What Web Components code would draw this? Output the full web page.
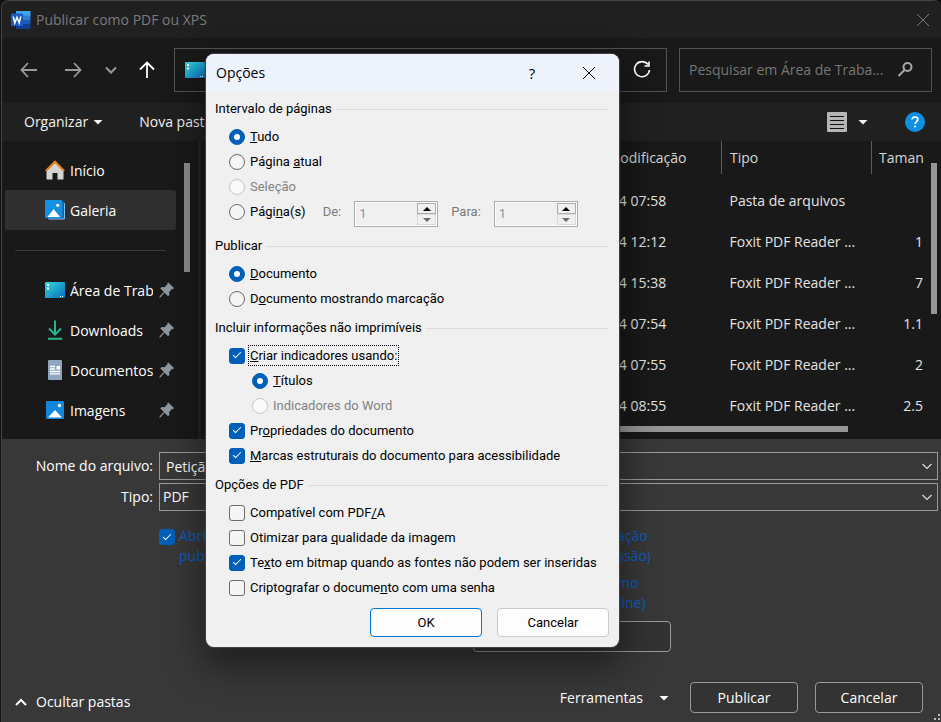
<!DOCTYPE html>
<html lang="pt-BR">
<head>
<meta charset="utf-8">
<title>Publicar como PDF ou XPS</title>
<style>
    body {
        margin: 0;
        background: #101010;
        color: #fff;
        font: 14px/20px "Open Sans", "Noto Sans", sans-serif;
    }
</style>
</head>
<body>
<publish-window></publish-window>

<script>
const ICONS = {
    word: `<svg viewBox="0 0 20 20" stroke-width="0"><path fill="#41a5ee" d="M5 1h14.500v5H5z"/><path fill="#2b7cd3" d="M5 5.500h14.500V10H5z"/><path fill="#185abd" d="M5 10h14.500v4.500H5z"/><path fill="#103f91" d="M5 14.500h14.500V19H5z"/><rect y="3.500" width="12" height="12.500" rx="1" fill="#185abd"/><path fill="none" stroke="#fff" stroke-width="1.500" d="M2.200 6.500l1.600 6.500L6 7.300 8.200 13l1.600-6.500"/></svg>`,
    close: `<svg viewBox="0 0 20 20"><path d="M4 4l12 12M16 4L4 16"/></svg>`,
    back: `<svg viewBox="0 0 20 20"><path stroke-width="1.800" d="M18 10H3M9 3L2.500 10 9 17"/></svg>`,
    forward: `<svg viewBox="0 0 20 20"><path stroke-width="1.800" d="M2 10h15M11 3l6.500 7L11 17"/></svg>`,
    down: `<svg viewBox="0 0 20 20"><path stroke-width="2" d="M5 7.500l5 5 5-5"/></svg>`,
    chevron: `<svg viewBox="0 0 20 20"><path stroke-width="1.200" d="M5.500 8l4.500 4.500L14.500 8"/></svg>`,
    up: `<svg viewBox="0 0 20 20"><path stroke-width="1.800" d="M10 18V3M3 9.500L10 2.500l7 7"/></svg>`,
    collapse: `<svg viewBox="0 0 20 20"><path stroke-width="2" d="M5 13l5-5 5 5"/></svg>`,
    caret: `<svg viewBox="0 0 20 20"><path fill="currentColor" stroke="none" d="M5.500 8h9L10 12.500z"/></svg>`,
    refresh: `<svg viewBox="0 0 20 20"><path stroke-width="1.600" d="M16 4.600A7.500 7.500 0 1 0 17.500 10M17 1.500V6h-4.500"/></svg>`,
    search: `<svg viewBox="0 0 20 20"><circle cx="12.500" cy="7" r="4" stroke-width="2"/><path stroke-width="2" d="M9.500 10L3.500 16"/></svg>`,
    list: `<svg viewBox="0 0 20 20"><rect width="20" height="20" rx="1" fill="#b5b5b5" stroke="none"/><path stroke="#111" d="M3 4.500h14M3 8.500h14M3 12.500h14M3 16.500h14"/></svg>`,
    help: `<svg viewBox="0 0 20 20"><circle cx="10" cy="10" r="10" fill="#0f8fe0" stroke="none"/><path stroke="#fff" stroke-width="1.700" d="M7.200 7.500C7.300 5.800 8.500 5 10 5s2.800.9 2.800 2.400c0 2-2.700 2.300-2.700 4.600"/><circle cx="10.100" cy="14.500" r="1.100" fill="#fff" stroke="none"/></svg>`,
    desktop: `<svg viewBox="0 0 20 20"><defs><linearGradient id="d" x2="1" y2="1"><stop stop-color="#35d8da"/><stop offset="1" stop-color="#0a6cc0"/></linearGradient></defs><rect y="2" width="20" height="16" rx="1" fill="url(#d)" stroke="none"/><path fill="#fff" stroke="none" d="M2 4h2v2H2zM2 7.500h2v2H2zM15 16h1v1h-1zM17 16h1v1h-1z"/></svg>`,
    home: `<svg viewBox="0 0 20 20"><path fill="#d4d4d4" stroke="none" d="M10 2.500L1.500 11v8.500h6V13h5v6.500h6V11z"/><path stroke="#e8821c" stroke-width="2" d="M.8 11L10 1.700 19.200 11"/></svg>`,
    gallery: `<svg viewBox="0 0 20 20"><rect x="3" y="2.500" width="17" height="17" rx="1.500" fill="#7dbdf0" stroke="none"/><rect x="2" y="1.500" width="17" height="17" rx="1" fill="#0b5fb0" stroke="none"/><rect width="17.500" height="18" rx="1" fill="#1590e0" stroke="none"/><path fill="#fff" stroke="none" d="M2.500 17L8.700 9l6.300 8z"/><circle cx="12.700" cy="5.300" r="1.600" fill="#fff" stroke="none"/></svg>`,
    download: `<svg viewBox="0 0 20 20"><path stroke="#24b88d" stroke-width="2" d="M10 .5V14M4 8.500l6 6 6-6M3 18.700h14"/></svg>`,
    document: `<svg viewBox="0 0 20 20"><rect x="3" width="14" height="20" rx="1" fill="#8fa6c0" stroke="none"/><path stroke="#fff" stroke-width="1.300" d="M5 6.500h5M5 9h5M5 11.500h10M5 13.800h10"/><path fill="#fff" stroke="none" d="M11.500 6H15v3.500h-3.500z"/></svg>`,
    image: `<svg viewBox="0 0 20 20"><rect x="1" y="1" width="18" height="18" rx="1" fill="#1285dc" stroke="none"/><path fill="#fff" stroke="none" d="M3 17.500L10 10l7 7.500z"/><circle cx="14.500" cy="5.500" r="1.700" fill="#fff" stroke="none"/></svg>`,
    pin: `<svg viewBox="1 2 17 17"><path fill="#8d979f" stroke="none" d="M12 2.500l6 6-1.200 1.200-1-.2-3 3 .3 3.300-1.400 1.400-3.700-3.700L4 18l-1.700.7.700-1.700L7.300 12.500 3.400 8.600 4.800 7.200l3.200.3 3-3-.2-.8z"/></svg>`
};

// <ui-icon name="..."> draws one of the icons above
class UiIcon extends HTMLElement {
    constructor() {
        super();
        this.attachShadow({ mode: 'open' });
        this.shadowRoot.innerHTML = `
            <style>
                :host { display: block; flex: none; width: 20px; height: 20px; }
                svg { display: block; width: 100%; height: 100%; fill: none; stroke: currentColor; }
            </style>
            ${ICONS[this.getAttribute('name')] || ''}
        `;
    }
}
customElements.define('ui-icon', UiIcon);

class NavItem extends HTMLElement {
    constructor() {
        super();
        this.attachShadow({ mode: 'open' });
        const pinned = this.hasAttribute('pinned');
        this.shadowRoot.innerHTML = `
            <style>
                :host { display: block; }
                a {
                    display: flex;
                    align-items: center;
                    gap: 5px;
                    height: 40px;
                    padding: 0 2px 0 40px;
                    color: #fff;
                    text-decoration: none;
                }
                :host([selected]) a { background: #303030; border-radius: 2px; }
                span { flex: 1; padding-top: 2px; overflow: hidden; white-space: nowrap; }
                .pin { width: 16px; height: 16px; }
            </style>
            <a href="#">
                <ui-icon name="${this.getAttribute('icon')}"></ui-icon>
                <span><slot></slot></span>
                ${pinned ? '<ui-icon class="pin" name="pin"></ui-icon>' : ''}
            </a>
        `;
    }
}
customElements.define('nav-item', NavItem);

class SideNav extends HTMLElement {
    constructor() {
        super();
        this.attachShadow({ mode: 'open' });
        this.shadowRoot.innerHTML = `
            <style>
                :host { display: flex; width: 196px; flex: none; border-right: 3px solid #232323; }
                nav { width: 171px; padding: 9px 0 0 3px; }
                hr { margin: 20px 10px 19px; border: 0; border-top: 1px solid #3a3a3a; }
                .bar { width: 6px; height: 109px; margin: 22px 0 0 8px; background: #8c8c8c; }
            </style>
            <nav>
                <nav-item icon="home">Início</nav-item>
                <nav-item icon="gallery" selected>Galeria</nav-item>
                <hr>
                <nav-item icon="desktop" pinned>Área de Trab</nav-item>
                <nav-item icon="download" pinned>Downloads</nav-item>
                <nav-item icon="document" pinned>Documentos</nav-item>
                <nav-item icon="image" pinned>Imagens</nav-item>
            </nav>
            <div class="bar"></div>
        `;
    }
}
customElements.define('side-nav', SideNav);

const FILES = [
    ['04/11/2024 07:58', 'Pasta de arquivos', ''],
    ['04/11/2024 12:12', 'Foxit PDF Reader ...', '1'],
    ['04/11/2024 15:38', 'Foxit PDF Reader ...', '7'],
    ['04/11/2024 07:54', 'Foxit PDF Reader ...', '1.1'],
    ['04/11/2024 07:55', 'Foxit PDF Reader ...', '2'],
    ['04/11/2024 08:55', 'Foxit PDF Reader ...', '2.5']
];

class FileList extends HTMLElement {
    constructor() {
        super();
        this.attachShadow({ mode: 'open' });
        this.shadowRoot.innerHTML = `
            <style>
                :host { display: flex; flex: 1; min-width: 0; padding-right: 4px; }
                .list { flex: 1; min-width: 0; }
                table { width: 100%; table-layout: fixed; border-collapse: collapse; color: #e4e4e4; }
                th, td { padding: 0 8px; font-weight: normal; text-align: left; white-space: nowrap; }
                th { height: 33px; color: #d6d6d6; border-right: 1px solid #5c5c5c; }
                th:last-child, td:last-child { padding: 0 0 0 7px; border-right: 0; }
                td { height: 41px; }
                td:last-child { text-align: right; }
                tbody::before { content: ""; display: block; height: 6px; }
                .date { width: 160px; }
                .type { width: 133px; }
                .size { width: 44px; }
                .across { width: calc(100% - 83px); height: 6px; margin-left: 8px; background: #969696; }
                .down { width: 6px; height: 151px; margin: 22px 0 0 8px; background: #969696; }
            </style>
            <div class="list">
                <table>
                    <thead>
                        <tr><th></th><th class="date">Data de modificação</th><th class="type">Tipo</th><th class="size">Taman</th></tr>
                    </thead>
                    <tbody>
                        ${FILES.map(([date, type, size]) => `<tr><td></td><td>${date}</td><td>${type}</td><td>${size}</td></tr>`).join('')}
                    </tbody>
                </table>
                <div class="across"></div>
            </div>
            <div class="down"></div>
        `;
    }
}
customElements.define('file-list', FileList);

// Checkbox or radio with its label; radios with the same name exclude each other
class OptionChoice extends HTMLElement {
    constructor() {
        super();
        this.attachShadow({ mode: 'open' });
        const type = this.getAttribute('type') || 'checkbox';
        this.shadowRoot.innerHTML = `
            <style>
                :host { display: block; }
                :host([indent]) { padding-left: 23px; }
                label { display: flex; width: fit-content; align-items: center; gap: 4px; height: 25px; white-space: nowrap; }
                span { padding: 1px 1px 0; }
                :host([disabled]) label { color: #838383; }
                :host([focused]) span { outline: 1px dotted #000; }
                :host([lines]) label { align-items: flex-start; height: auto; gap: 3px; }
                :host([lines]) span { padding-top: 0; }
                :host([lines]) input { margin-top: 3px; }
                input {
                    appearance: none;
                    flex: none;
                    display: grid;
                    place-items: center;
                    width: 16px;
                    height: 16px;
                    margin: 0;
                    border: 1px solid #6b6b6b;
                    border-radius: 3px;
                    background: #f5f5f5;
                }
                input[type=radio] { border-radius: 50%; }
                input:checked { border-color: #005fb8; background: #005fb8; }
                input[type=radio]:checked::before { content: ""; width: 6px; height: 6px; border-radius: 50%; background: #fff; }
                input[type=checkbox]:checked::before {
                    content: "";
                    width: 7px;
                    height: 3px;
                    margin-bottom: 3px;
                    border: solid #fff;
                    border-width: 0 0 1px 1px;
                    transform: rotate(-45deg);
                }
                input:disabled { border-color: #c4c4c4; background: #fafafa; }
            </style>
            <label>
                <input type="${type}" ${this.hasAttribute('checked') ? 'checked' : ''} ${this.hasAttribute('disabled') ? 'disabled' : ''}>
                <span><slot></slot></span>
            </label>
        `;
        this.input = this.shadowRoot.querySelector('input');
        this.input.addEventListener('change', () => {
            if (type !== 'radio') return;
            const name = this.getAttribute('name');
            this.getRootNode().querySelectorAll(`option-choice[name="${name}"]`).forEach(other => {
                if (other !== this) other.input.checked = false;
            });
        });
    }
}
customElements.define('option-choice', OptionChoice);

class OptionGroup extends HTMLElement {
    constructor() {
        super();
        this.attachShadow({ mode: 'open' });
        this.shadowRoot.innerHTML = `
            <style>
                :host { display: block; margin-bottom: 4px; }
                .head { display: flex; align-items: center; gap: 4px; height: 26px; }
                .head::after { content: ""; flex: 1; height: 1px; background: #dcdcdc; }
                .rows { padding: 2px 0 0 14px; }
            </style>
            <div class="head">${this.getAttribute('heading')}</div>
            <div class="rows"><slot></slot></div>
        `;
    }
}
customElements.define('option-group', OptionGroup);

class PageSpinner extends HTMLElement {
    constructor() {
        super();
        this.attachShadow({ mode: 'open' });
        this.shadowRoot.innerHTML = `
            <style>
                :host { display: block; color: #7a7a7a; }
                label { display: flex; align-items: flex-start; gap: 13px; line-height: 22px; }
                .box { display: flex; width: 80px; height: 22px; padding: 1px; border: 1px solid #abadb3; background: #fff; }
                input { flex: 1; min-width: 0; padding: 0 3px; border: 0; background: #f0f0f0; color: #8a93a3; font: inherit; }
                .steps { display: flex; flex-direction: column; width: 19px; }
                button { display: grid; place-items: center; flex: 1; padding: 0; border: 1px solid #dadada; background: #f0f0f0; color: #6b6b6b; }
                button:first-child { border-color: #acacac; color: #000; }
                svg { display: block; width: 8px; height: 4px; fill: currentColor; }
            </style>
            <label>${this.getAttribute('label')}
                <span class="box">
                    <input value="1" disabled>
                    <span class="steps">
                        <button aria-label="Aumentar"><svg viewBox="0 0 8 4"><path d="M4 0l4 4H0z"/></svg></button>
                        <button aria-label="Diminuir"><svg viewBox="0 0 8 4"><path d="M0 0h8L4 4z"/></svg></button>
                    </span>
                </span>
            </label>
        `;
    }
}
customElements.define('page-spinner', PageSpinner);

class OptionsDialog extends HTMLElement {
    constructor() {
        super();
        this.attachShadow({ mode: 'open' });
        this.shadowRoot.innerHTML = `
            <style>
                :host {
                    display: block;
                    box-sizing: border-box;
                    width: 413px;
                    max-width: 100vw;
                    border-radius: 8px;
                    background: #f0f0f0;
                    box-shadow: 0 0 1px 1px #444, 0 16px 36px 4px rgba(0, 0, 0, 0.45);
                    color: #000;
                    font: 13px/18px Roboto, "Open Sans", sans-serif;
                    overflow: hidden;
                }
                header { display: flex; align-items: center; height: 37px; padding: 0 20px 0 10px; background: #eef3fb; }
                h1 { flex: 1; margin: 0; font: 14px/20px "Open Sans", sans-serif; }
                header button { display: grid; place-items: center; width: 20px; height: 20px; margin-left: 37px; padding: 0; border: 0; background: none; color: #000; font: 15px/20px "Open Sans", sans-serif; }
                .body { padding: 5px 10px 10px 9px; }
                .pages { display: flex; align-items: flex-start; height: 30px; }
                .pages option-choice { margin-right: 16px; }
                page-spinner { margin: 2px 13px 0 0; }
                footer { display: flex; justify-content: flex-end; gap: 15px; padding-top: 4px; }
                footer button { width: 112px; height: 29px; border: 1px solid #c8ccd2; border-radius: 4px; background: #fdfdfd; color: #000; font: inherit; }
                footer .default { border-color: #0078d4; }
            </style>
            <header>
                <h1>Opções</h1>
                <button aria-label="Ajuda">?</button>
                <button aria-label="Fechar"><ui-icon name="close"></ui-icon></button>
            </header>
            <div class="body">
                <option-group heading="Intervalo de páginas">
                    <option-choice type="radio" name="range" checked><u>T</u>udo</option-choice>
                    <option-choice type="radio" name="range">Página <u>a</u>tual</option-choice>
                    <option-choice type="radio" name="range" disabled>Seleção</option-choice>
                    <div class="pages">
                        <option-choice type="radio" name="range">Pági<u>n</u>a(s)</option-choice>
                        <page-spinner label="De:"></page-spinner>
                        <page-spinner label="Para:"></page-spinner>
                    </div>
                </option-group>
                <option-group heading="Publicar">
                    <option-choice type="radio" name="what" checked><u>D</u>ocumento</option-choice>
                    <option-choice type="radio" name="what">D<u>o</u>cumento mostrando marcação</option-choice>
                </option-group>
                <option-group heading="Incluir informações não imprimíveis">
                    <option-choice checked focused><u>C</u>riar indicadores usando:</option-choice>
                    <option-choice indent type="radio" name="marks" checked><u>T</u>ítulos</option-choice>
                    <option-choice indent type="radio" name="marks" disabled>Indicadores do Word</option-choice>
                    <option-choice checked>Pr<u>o</u>priedades do documento</option-choice>
                    <option-choice checked><u>M</u>arcas estruturais do documento para acessibilidade</option-choice>
                </option-group>
                <option-group heading="Opções de PDF">
                    <option-choice>Compatível com PDF<u>/</u>A</option-choice>
                    <option-choice>Otimizar para <u>q</u>ualidade da imagem</option-choice>
                    <option-choice checked>Te<u>x</u>to em bitmap quando as fontes não podem ser inseridas</option-choice>
                    <option-choice>Criptografar o docume<u>n</u>to com uma senha</option-choice>
                </option-group>
                <footer>
                    <button class="default">OK</button>
                    <button>Cancelar</button>
                </footer>
            </div>
        `;
    }
}
customElements.define('options-dialog', OptionsDialog);

class SaveForm extends HTMLElement {
    constructor() {
        super();
        this.attachShadow({ mode: 'open' });
        this.shadowRoot.innerHTML = `
            <style>
                :host { display: flex; flex-direction: column; padding: 13px 3px 9px 0; background: #383838; }
                .fields { display: grid; grid-template-columns: 151px 1fr; gap: 3px 6px; align-items: center; text-align: right; }
                .field { display: flex; align-items: center; height: 26px; border: 1px solid #999; background: #383838; }
                .field ui-icon { pointer-events: none; color: #ddd; }
                input, select { flex: 1; min-width: 0; height: 26px; padding: 0 6px; border: 0; background: none; color: #fff; font: inherit; appearance: none; }
                select { padding: 0 3px; }
                .options { display: flex; padding: 15px 0 0 157px; color: #0a5dc2; }
                .open { flex: none; width: 344px; }
                .optimize { display: flex; flex-direction: column; gap: 7px; }
                .more { width: 198px; height: 31px; margin: 8px 0 0 471px; }
                footer { display: flex; align-items: center; margin-top: auto; padding: 30px 15px 0 9px; }
                button { padding: 0; border: 1px solid #999; border-radius: 4px; background: #333; color: #fff; font: inherit; }
                footer button { width: 108px; height: 31px; margin-left: 17px; }
                footer button.plain { display: flex; align-items: center; width: auto; margin: 0; border: 0; background: none; }
                footer button.hide { gap: 5px; margin-right: auto; padding-top: 8px; }
                .tools { gap: 11px; }
                .tools + button { margin-left: 16px; }
            </style>
            <div class="fields">
                <label for="name">Nome do arquivo:</label>
                <div class="field"><input id="name" value="Petição"><ui-icon name="chevron"></ui-icon></div>
                <label for="type">Tipo:</label>
                <div class="field"><select id="type"><option>PDF</option></select><ui-icon name="chevron"></ui-icon></div>
            </div>
            <div class="options">
                <option-choice class="open" lines checked>Abrir após<br>publicar</option-choice>
                <div class="optimize">
                    <option-choice lines type="radio" name="target" checked>Padrão (publicação<br>online e impressão)</option-choice>
                    <option-choice lines type="radio" name="target">Tamanho mínimo<br>(publicação online)</option-choice>
                </div>
            </div>
            <button class="more" aria-label="Opções"></button>
            <footer>
                <button class="plain hide"><ui-icon name="collapse"></ui-icon>Ocultar pastas</button>
                <button class="plain tools">Ferramentas <ui-icon name="caret"></ui-icon></button>
                <button>Publicar</button>
                <button>Cancelar</button>
            </footer>
        `;
    }
}
customElements.define('save-form', SaveForm);

class PublishWindow extends HTMLElement {
    constructor() {
        super();
        this.attachShadow({ mode: 'open' });
        this.shadowRoot.innerHTML = `
            <style>
                :host {
                    display: flex;
                    flex-direction: column;
                    box-sizing: border-box;
                    position: relative;
                    min-height: 100vh;
                    margin-left: 1px;
                    border: solid #454545;
                    border-width: 1px 0 0 1px;
                    border-radius: 8px 8px 0 0;
                    background: #191919;
                    overflow: hidden;
                }
                header { display: flex; align-items: center; gap: 5px; height: 37px; padding: 0 8px 0 9px; background: #202020; color: #7b7b7b; }
                h1 { flex: 1; margin: 0; font-size: 14px; font-weight: normal; }
                button { display: flex; align-items: center; padding: 0; border: 0; background: none; color: inherit; font: inherit; }
                .nav { display: flex; align-items: center; height: 64px; padding: 0 9px 1px 17px; color: #9a9a9a; }
                .nav .up { color: #fff; margin-left: 16px; }
                .forward { margin: 0 18px 0 24px; }
                .address, .search { display: flex; align-items: center; justify-content: space-between; box-sizing: border-box; height: 44px; border: 1px solid #535353; }
                .address { flex: 1; margin: 0 12px 0 17px; padding: 0 14px 0 10px; color: #fff; }
                .search { width: 253px; padding: 0 16px 0 9px; }
                .search ui-icon { color: #a8a8a8; }
                .search input { flex: 1; min-width: 0; padding: 0; border: 0; background: none; color: #fff; font: inherit; }
                .search input::placeholder { color: #777; opacity: 1; }
                .tools { display: flex; align-items: center; height: 38px; padding: 0 16px 0 22px; background: #202020; color: #f2f2f2; }
                .new { margin-left: 31px; }
                .view { margin-left: auto; gap: 6px; }
                .help { margin-left: 32px; }
                main { display: flex; flex: 1; }
                options-dialog { position: absolute; top: 53px; left: 204px; }
                .grip { position: absolute; right: 0; bottom: 0; width: 8px; height: 8px; color: #bbb; }
            </style>
            <header>
                <ui-icon name="word"></ui-icon>
                <h1>Publicar como PDF ou XPS</h1>
                <button aria-label="Fechar"><ui-icon name="close"></ui-icon></button>
            </header>
            <div class="nav">
                <button aria-label="Voltar"><ui-icon name="back"></ui-icon></button>
                <button class="forward" aria-label="Avançar"><ui-icon name="forward"></ui-icon></button>
                <button aria-label="Locais recentes"><ui-icon name="down"></ui-icon></button>
                <button class="up" aria-label="Subir"><ui-icon name="up"></ui-icon></button>
                <div class="address">
                    <ui-icon name="desktop"></ui-icon>
                    <button aria-label="Atualizar"><ui-icon name="refresh"></ui-icon></button>
                </div>
                <div class="search">
                    <input type="text" aria-label="Pesquisar" placeholder="Pesquisar em Área de Traba...">
                    <ui-icon name="search"></ui-icon>
                </div>
            </div>
            <div class="tools">
                <button>Organizar <ui-icon name="caret"></ui-icon></button>
                <button class="new">Nova pasta</button>
                <button class="view" aria-label="Exibição"><ui-icon name="list"></ui-icon><ui-icon name="caret"></ui-icon></button>
                <button class="help" aria-label="Ajuda"><ui-icon name="help"></ui-icon></button>
            </div>
            <main>
                <side-nav></side-nav>
                <file-list></file-list>
            </main>
            <save-form></save-form>
            <svg class="grip" viewBox="0 0 8 8" fill="currentColor"><path d="M5 0h2v2H5zM5 4h2v2H5zM1 4h2v2H1z"/></svg>
            <options-dialog></options-dialog>
        `;
    }
}
customElements.define('publish-window', PublishWindow);
</script>
</body>
</html>
